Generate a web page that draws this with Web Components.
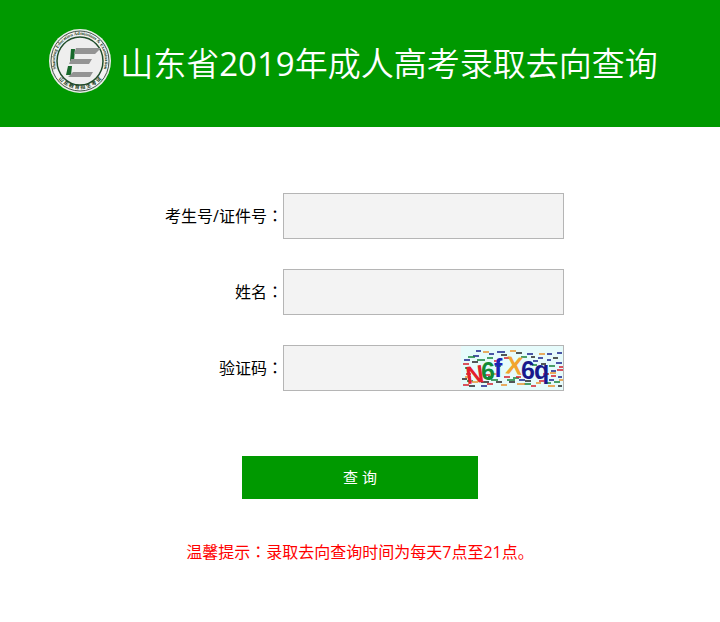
<!DOCTYPE html>
<html lang="zh-CN">
<head>
<meta charset="utf-8">
<meta name="viewport" content="width=device-width, initial-scale=1">
<title>山东省2019年成人高考录取去向查询</title>
<style>
  body {
    margin: 0;
    background: #fff;
    color: #000;
    font: 16px/24px "Open Sans", "Noto Sans CJK SC", sans-serif;
  }
  .year {
    font-weight: 400;
  }
  .colon {
    font-family: "Noto Sans CJK TC", sans-serif;
  }
</style>
</head>
<body>
<page-banner>
  <school-logo slot="logo"></school-logo>
  山东省<span class="year">2019</span>年成人高考录取去向查询
</page-banner>
<query-form>
  <form-field label="考生号/证件号" name="ksh"></form-field>
  <form-field label="姓名" name="xm"></form-field>
  <form-field label="验证码" name="yzm">
    <captcha-image></captcha-image>
  </form-field>
  <span slot="tip">温馨提示<span class="colon" lang="zh-TW">：</span>录取去向查询时间为每天7点至21点。</span>
</query-form>

<script>
class SchoolLogo extends HTMLElement {
  constructor() {
    super();
    this.attachShadow({ mode: "open" });
    this.shadowRoot.innerHTML = `
      <style>
        :host {
          display: block;
          flex: none;
          width: 64px;
          height: 66px;
        }
        svg {
          display: block;
          width: 100%;
          height: 100%;
        }
        text {
          fill: #1b3d22;
          font-family: "Liberation Serif", "Noto Sans CJK SC", sans-serif;
          font-weight: bold;
        }
      </style>
      <svg viewBox="0 0 64 66" role="img" aria-label="山东省教育招生考试院">
        <defs>
          <path id="top" d="M11 47A25 26 0 1 1 53 47"/>
          <path id="bottom" d="M4 33A28 28 0 0 0 60 33"/>
        </defs>
        <ellipse cx="32" cy="33" rx="31" ry="32" fill="#e8eee8"/>
        <ellipse cx="32" cy="33" rx="29" ry="30" fill="#f4f4f4" stroke="#45544a"/>
        <ellipse cx="32" cy="33" rx="23" ry="24" fill="#eee" stroke="#204d2b" stroke-width="1.5"/>
        <text font-size="4.6"><textPath href="#top" startOffset="50%" text-anchor="middle">Shandong Education Admissions &amp; Examination</textPath></text>
        <text font-size="5"><textPath href="#bottom" startOffset="50%" text-anchor="middle">山 东 教 育 招 生 考 试</textPath></text>
        <path d="M23 21h4l-1 12h-4zM20 38h4l-1 9h-5z" fill="#17692b"/>
        <path d="M28 20h25l-6 6H26zM23 31h21l-3 5H21zM25 44h20l-3 5H20z" fill="#949494"/>
      </svg>
    `;
  }
}

class PageBanner extends HTMLElement {
  constructor() {
    super();
    this.attachShadow({ mode: "open" });
    this.shadowRoot.innerHTML = `
      <style>
        :host {
          display: block;
          background: #090;
          color: #fff;
        }
        header {
          display: flex;
          align-items: flex-end;
          justify-content: center;
          gap: 8px;
          padding: 28px 30px 33px 16px;
        }
        h1 {
          margin: 0;
          font-size: 33px;
          line-height: 60px;
          font-weight: 350;
        }
      </style>
      <header>
        <slot name="logo"></slot>
        <h1><slot></slot></h1>
      </header>
    `;
  }
}

class CaptchaImage extends HTMLElement {
  constructor() {
    super();
    this.attachShadow({ mode: "open" });
    // x, y, width of each noise dash, grouped by colour
    const dashes = {
      "#17208a": [[15, 5, 5], [28, 8, 5], [3, 14, 6], [12, 10, 6], [36, 6, 8], [66, 8, 6], [77, 12, 5], [86, 8, 5], [96, 7, 5], [86, 14, 4], [72, 15, 5], [95, 17, 6], [90, 25, 5], [88, 34, 5], [20, 40, 6], [58, 34, 6], [97, 31, 4]],
      "#168238": [[7, 11, 7], [16, 14, 8], [26, 12, 6], [4, 22, 6], [60, 11, 6], [71, 19, 5], [88, 20, 6], [30, 34, 7], [6, 35, 6], [46, 34, 8], [63, 38, 7], [84, 37, 6], [52, 32, 6], [93, 36, 6], [34, 20, 6]],
      "#d3212c": [[2, 18, 6], [33, 15, 6], [43, 12, 6], [5, 28, 5], [2, 39, 6], [26, 38, 6], [43, 31, 6], [55, 31, 5], [82, 28, 6], [98, 21, 4], [96, 24, 6], [78, 35, 6], [70, 40, 5], [90, 30, 5], [23, 29, 6]],
      "#e9922e": [[22, 6, 6], [4, 31, 6], [49, 5, 6], [56, 38, 8], [40, 39, 6], [78, 8, 6], [89, 27, 6], [98, 34, 4], [11, 36, 6], [75, 37, 5], [32, 28, 6], [87, 40, 7]],
      "#222": [[11, 16, 6], [1, 33, 5], [8, 40, 6], [20, 36, 8], [40, 9, 6], [55, 7, 6], [64, 35, 6], [70, 11, 4], [80, 18, 5], [92, 12, 5], [35, 36, 6], [48, 36, 6], [27, 31, 5], [97, 40, 4]]
    };
    const noise = Object.entries(dashes)
      .map(([colour, list]) => {
        const d = list.map(([x, y, w]) => `M${x} ${y}h${w}`).join("");
        return `<path d="${d}" stroke="${colour}" stroke-width="1.5"/>`;
      })
      .join("");
    this.shadowRoot.innerHTML = `
      <style>
        :host {
          display: block;
          flex: none;
          width: 102px;
          height: 44px;
        }
        svg {
          display: block;
        }
        text {
          font: bold 25px "Liberation Sans", sans-serif;
        }
      </style>
      <svg width="102" height="44" viewBox="0 0 102 44" role="img" aria-label="验证码图片">
        <rect width="102" height="44" fill="#e6fbfb"/>
        ${noise}
        <text x="5" y="37" fill="#e3202c" transform="rotate(-8 15 30)">N</text>
        <text x="20" y="34" fill="#128a35">6</text>
        <text x="33" y="31" fill="#1c23b4">f</text>
        <text x="45" y="28" fill="#f2a52e" transform="rotate(6 52 20)">X</text>
        <text x="60" y="33" fill="#17198c">6</text>
        <text x="73" y="33" fill="#17198c">q</text>
      </svg>
    `;
  }
}

class FormField extends HTMLElement {
  constructor() {
    super();
    this.attachShadow({ mode: "open" });
    const label = this.getAttribute("label");
    const name = this.getAttribute("name");
    this.shadowRoot.innerHTML = `
      <style>
        :host {
          display: flex;
          align-items: center;
          justify-content: center;
          padding-left: 7px;
        }
        label {
          flex: none;
          width: 120px;
          padding-bottom: 2px;
          text-align: right;
          white-space: nowrap;
        }
        .colon {
          font-family: "Noto Sans CJK TC", sans-serif;
        }
        .box {
          display: flex;
          flex: 0 1 281px;
          min-width: 0;
          box-sizing: border-box;
          border: 1px solid #b5b5b5;
          background: #f3f3f3;
        }
        input {
          flex: 1;
          min-width: 0;
          height: 44px;
          box-sizing: border-box;
          padding: 0 8px;
          border: 0;
          background: none;
          font: inherit;
        }
      </style>
      <label for="${name}">${label}<span class="colon" lang="zh-TW">：</span></label>
      <div class="box">
        <input type="text" id="${name}" name="${name}" autocomplete="off">
        <slot></slot>
      </div>
    `;
  }
}

class QueryForm extends HTMLElement {
  constructor() {
    super();
    this.attachShadow({ mode: "open" });
    this.shadowRoot.innerHTML = `
      <style>
        :host {
          display: block;
          padding: 66px 16px 32px;
        }
        .fields {
          display: flex;
          flex-direction: column;
          gap: 30px;
        }
        button {
          display: block;
          width: 236px;
          height: 43px;
          margin: 65px auto 40px;
          padding: 0 0 2px;
          border: 0;
          background: #090;
          color: #fff;
          font: inherit;
          font-size: 15px;
          cursor: pointer;
        }
        p {
          margin: 0;
          color: #f00;
          text-align: center;
        }
      </style>
      <form>
        <div class="fields"><slot></slot></div>
        <button type="submit">查 询</button>
      </form>
      <p><slot name="tip"></slot></p>
    `;
  }

  connectedCallback() {
    this.shadowRoot
      .querySelector("form")
      .addEventListener("submit", (e) => e.preventDefault());
  }
}

customElements.define("school-logo", SchoolLogo);
customElements.define("page-banner", PageBanner);
customElements.define("captcha-image", CaptchaImage);
customElements.define("form-field", FormField);
customElements.define("query-form", QueryForm);
</script>
</body>
</html>
